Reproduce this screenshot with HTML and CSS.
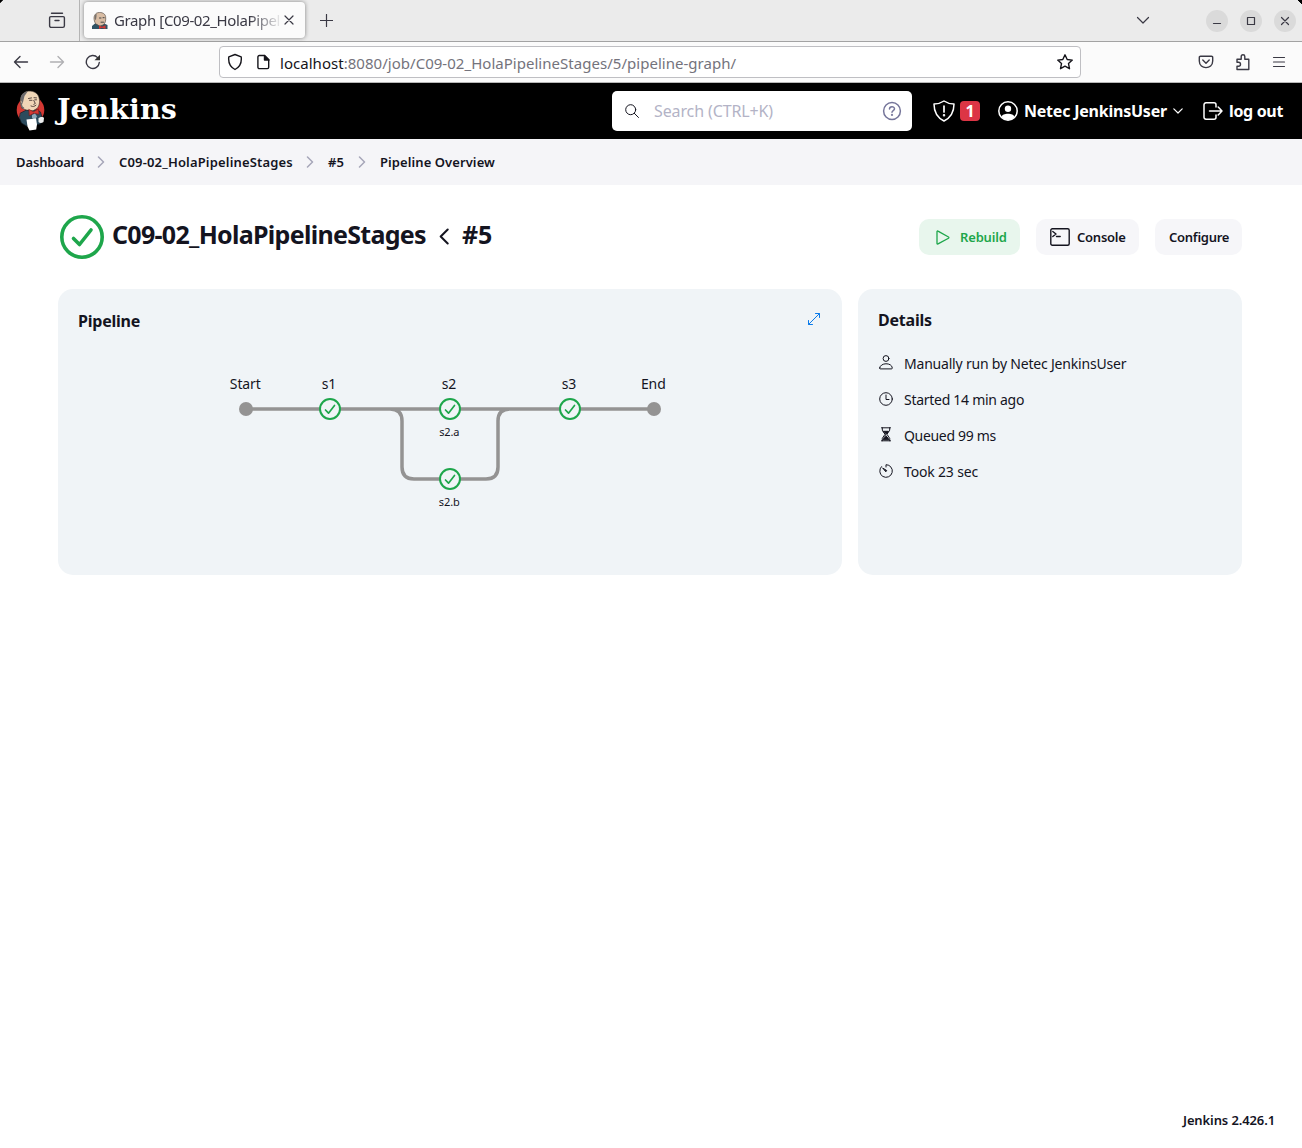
FILE: index.html
```
<!DOCTYPE html>
<html lang="en">
<head>
<meta charset="utf-8">
<title>Graph [C09-02_HolaPipelineStages]</title>
<link rel="stylesheet" href="styles.css">
</head>
<body>
<svg class="defs" width="0" height="0">
  <symbol id="chev" viewBox="0 0 8 12"><path d="M1.5 1l5 5-5 5"/></symbol>
</svg>

<div class="tabbar">
  <div class="history"><svg width="18" height="18" viewBox="0 0 18 18" class="ico"><path d="M3.500 2.200h11M2.800 5.600h12.400a1.200 1.200 0 0 1 1.200 1.200v8a1.600 1.600 0 0 1-1.600 1.600H3.200a1.600 1.600 0 0 1-1.600-1.600v-8a1.200 1.200 0 0 1 1.200-1.200zM7 9.500h4"/></svg></div>
  <div class="tab">
    <svg class="favicon" width="16" height="17" viewBox="0 0 16 17">
      <path d="M0 17v-3l3-2.500h9l3.500 1.500v4z" fill="#2f5264"/>
      <path d="M3.500 11.500C1.500 8 1.200 3.500 4.500 1.200 8-.5 13 .8 13.600 4.500c.5 3.500-.1 7-2.600 8.500L8 14z" fill="#d9bda4" stroke="#5b5149" stroke-width=".7"/>
      <path d="M3.700 8.500C2 6 2.200 3 4.500 1.500c.3 2-.2 4.500-.8 7z" fill="#77716c"/>
      <path d="M7.500 6h1.500M11 5.700h1.200M9 10.200h2.500" stroke="#444" stroke-width="1"/>
      <path d="M7 13.500l3 1.200 3.500-1.500v3.800l-3.500-1.200-3 1.200z" fill="#d33833"/>
    </svg>
    <span class="tab-title">Graph [C09-02_HolaPipel</span>
    <svg width="10" height="10" viewBox="0 0 10 10" class="ico thin close"><path d="M1 1l8 8M9 1L1 9"/></svg>
  </div>
  <svg width="13" height="13" viewBox="0 0 13 13" class="ico thin plus"><path d="M6.500 .5v12M.5 6.500h12"/></svg>
  <div class="window-controls">
    <svg width="14" height="9" viewBox="0 0 14 9" class="ico thin tabs-menu"><path d="M1.500 1.500L7 7l5.500-5.500"/></svg>
    <span class="wbtn"><svg width="10" height="10" viewBox="0 0 10 10" class="ico thin"><path d="M1.500 7.500h7"/></svg></span>
    <span class="wbtn"><svg width="10" height="10" viewBox="0 0 10 10" class="ico thin"><path d="M1.500 1.500h7v7h-7z"/></svg></span>
    <span class="wbtn"><svg width="10" height="10" viewBox="0 0 10 10" class="ico thin"><path d="M1.500 1.500l7 7M8.500 1.500l-7 7"/></svg></span>
  </div>
</div>

<div class="toolbar">
  <svg width="16" height="14" viewBox="0 0 16 14" class="ico"><path d="M14.500 7H1.500M7 1.500L1.500 7 7 12.500"/></svg>
  <svg width="16" height="14" viewBox="0 0 16 14" class="ico faded"><path d="M1.500 7h13M9 1.500L14.500 7 9 12.500"/></svg>
  <svg width="16" height="16" viewBox="0 0 16 16" class="ico reload"><path d="M14.300 8.500A6.500 6.500 0 1 1 12.600 3.600L14 5"/><path d="M15 .8v5.500H9.500z" fill="#333" stroke="none"/></svg>
  <div class="urlbar">
    <svg width="16" height="18" viewBox="0 0 16 18" class="ico dark"><path d="M8 1.500l6.200 2.300c.6 5-1 10-6.200 12.700C2.800 13.800 1.200 8.800 1.800 3.800z"/></svg>
    <svg width="13" height="16" viewBox="0 0 13 16" class="ico dark page"><path d="M2.300 1.500h5.200l4.200 4.200v7.500a1.400 1.400 0 0 1-1.400 1.400h-8A1.400 1.400 0 0 1 .9 13.200V2.900a1.400 1.400 0 0 1 1.400-1.400z"/><path d="M7.500 1.500V6h4.500z" fill="#15141a"/></svg>
    <span class="url"><b>localhost</b>:8080/job/C09-02_HolaPipelineStages/5/pipeline-graph/</span>
    <svg width="18" height="18" viewBox="0 0 18 18" class="ico dark star"><path d="M9 1.800l2.200 4.700 5.100.6-3.800 3.500 1 5.100L9 13.200l-4.500 2.500 1-5.100L1.700 7.100l5.100-.6z"/></svg>
  </div>
  <div class="tools">
    <svg width="16" height="16" viewBox="0 0 16 16" class="ico"><path d="M2.500 2.200h11a1.200 1.200 0 0 1 1.200 1.200V7c0 8.800-13.400 8.800-13.400 0V3.400a1.200 1.200 0 0 1 1.200-1.200zM4.800 6l3.200 3.200L11.200 6"/></svg>
    <svg width="16" height="18" viewBox="0 0 16 18" class="ico"><path d="M2 9.200V6.200h4.200V3.500a1.800 1.800 0 0 1 3.600 0v2.700h4v10.300H2v-3.300h1.500a2 2 0 0 0 0-4z"/></svg>
    <svg width="14" height="12" viewBox="0 0 14 12" class="ico thin"><path d="M1.500 1.500h11M1.500 6h11M1.500 10.500h11"/></svg>
  </div>
</div>

<header class="header">
  <svg class="butler" width="32" height="42" viewBox="0 0 32 42">
    <circle cx="15.500" cy="20" r="13.800" fill="#d33833"/>
    <path d="M5.500 23l6-3h11l3 2 2 7-2 5-14 2-5-3-2-5z" fill="#2c4b5d" stroke="#12202a" stroke-width=".7"/>
    <path d="M7 18C4 12.500 5 5 9.500 2.500 14-.3 21 1 23.500 6c1.800 4.500 1.200 9.500-1.500 12.500l-4 2.300c-4 0-9-1-11-2.800z" fill="#f0d6b7" stroke="#332b28" stroke-width=".6"/>
    <path d="M7.800 13C4.500 10.500 5 4.500 9.500 2.500c1-.6 2.200-.9 3.200-1L9.500 6z" fill="#6d6b6d"/>
    <path d="M7 13c-1.200.5-.6 4 1.500 5" fill="none" stroke="#6d6b6d" stroke-width="1.400"/>
    <path d="M13.500 8.500l3-.6M19 7.700l2.500.2M14.500 10.300h2.500M19.800 9.800h1.700M18.800 10.500l1.500 3-1.500.8M16 16c2 1 3.500.5 5-.8" fill="none" stroke="#4a3a35" stroke-width=".9"/>
    <path d="M14 19.500l4.500 2.300 5-3 .5 5.500-5-1-4.500 2.200z" fill="#d33833" stroke="#7b1a1a" stroke-width=".6"/>
    <path d="M17 25l3-1.500 2 3-2 3.500-3-2z" fill="#8fa9ba"/>
    <path d="M23.500 28.500c1-2 5-2 5.500-.5l-.5 4c-2 1.500-4 1-5 0z" fill="#eee"/>
    <path d="M11.500 29.500l9.500-1 1 6-.8 5-6.700 1-2-4z" fill="#fff"/>
  </svg>
  <span class="wordmark">Jenkins</span>
  <div class="search">
    <svg width="14" height="14" viewBox="0 0 14 14" class="ico hair"><circle cx="5.700" cy="5.700" r="5"/><path d="M9.300 9.300L13.500 13.500"/></svg>
    <span class="placeholder">Search (CTRL+K)</span>
    <svg width="20" height="20" viewBox="0 0 20 20" class="help"><circle cx="10" cy="10" r="8.400"/><path d="M7.500 8.100c0-3.200 5-3 5-.3 0 1.700-2.500 1.800-2.500 3.500"/><circle cx="10" cy="13.900" r=".4"/></svg>
  </div>
  <svg width="22" height="22" viewBox="0 0 22 22" class="white warn"><path d="M11 1c3 2 6 3 10 3 0 9-4 14-10 17C5 18 1 13 1 4c4 0 7-1 10-3z"/><path d="M11 6v6" stroke-width="1.700"/><circle cx="11" cy="15.300" r=".5"/></svg>
  <span class="count">1</span>
  <svg width="20" height="20" viewBox="0 0 20 20" class="white person"><circle cx="10" cy="10" r="9.200"/><circle cx="10" cy="7.700" r="3.200" fill="#fff" stroke="none"/><path d="M3.600 16c.4-4.200 12.400-4.200 12.800 0-3 4-9.800 4-12.800 0z" fill="#fff" stroke="none"/></svg>
  <span class="user">Netec JenkinsUser</span>
  <svg width="10" height="6" viewBox="0 0 10 6" class="white caret"><path d="M.8 .8L5 5 9.200 .8"/></svg>
  <svg width="20" height="18" viewBox="0 0 20 18" class="white exit"><path d="M13 5V2.800A2 2 0 0 0 11 .8H3a2 2 0 0 0-2 2v12.400a2 2 0 0 0 2 2h8a2 2 0 0 0 2-2V13M6.500 9H19M15.200 5L19 9l-3.800 4"/></svg>
  <span class="logout">log out</span>
</header>

<nav class="crumbs">
  <span class="c1">Dashboard</span><svg width="8" height="12"><use href="#chev"/></svg>
  <span class="c2">C09-02_HolaPipelineStages</span><svg width="8" height="12"><use href="#chev"/></svg>
  <span class="c3">#5</span><svg width="8" height="12"><use href="#chev"/></svg>
  <span class="c4">Pipeline Overview</span>
</nav>

<main class="main">
  <div class="title-row">
    <svg class="status" width="44" height="44" viewBox="0 0 44 44"><circle cx="22" cy="22" r="20.200"/><path d="M13.500 23.500l6 6L31 15"/></svg>
    <h1><span>C09-02_HolaPipelineStages</span><svg width="10" height="17" viewBox="0 0 10 17"><path d="M8.700 1.500l-7 7 7 7"/></svg><span class="num">#5</span></h1>
    <div class="actions">
      <span class="btn rebuild"><svg width="14" height="15" viewBox="0 0 14 15"><path d="M1 1.600v11.800c0 .6.500.8 1 .5l10.500-5.700c.5-.3.500-.9 0-1.200L2 1.100c-.5-.3-1-.1-1 .5z"/></svg><span>Rebuild</span></span>
      <span class="btn console"><svg width="20" height="18" viewBox="0 0 20 18"><rect x=".8" y=".8" width="18.400" height="16.400" rx="1.500"/><path d="M2.800 3.500l3.200 2.500-3.200 2.500M6.500 8.500h3.700"/></svg><span>Console</span></span>
      <span class="btn configure"><span>Configure</span></span>
    </div>
  </div>
  <div class="cards">
    <section class="card">
      <div class="card-head"><h2 class="pipe">Pipeline</h2>
        <svg width="14" height="14" viewBox="0 0 14 14" class="expand"><path d="M1.500 12.500l11-11M8.500 1.500h4v4M1.500 8.500v4h4"/></svg>
      </div>
      <svg class="graph" width="480" height="160" viewBox="210 360 480 160">
        <g class="edges"><path d="M246 409H654M340 409h50q12 0 12 12v46q0 12 12 12h72q12 0 12-12v-46q0-12 12-12h50"/></g>
        <circle cx="246" cy="409" r="7" fill="#949393"/><circle cx="654" cy="409" r="7" fill="#949393"/>
        <g class="nodes">
          <g transform="translate(330 409)"><circle r="10"/><path d="M-4.500 1l3 3.200L4.500-3.500"/></g>
          <g transform="translate(450 409)"><circle r="10"/><path d="M-4.500 1l3 3.200L4.500-3.500"/></g>
          <g transform="translate(570 409)"><circle r="10"/><path d="M-4.500 1l3 3.200L4.500-3.500"/></g>
          <g transform="translate(450 479)"><circle r="10"/><path d="M-4.500 1l3 3.200L4.500-3.500"/></g>
        </g>
        <g class="labels"><text x="245.300" y="389">Start</text><text x="329" y="389">s1</text><text x="449" y="389">s2</text><text x="569" y="389">s3</text><text x="653.300" y="389">End</text></g>
        <g class="labels small"><text x="449.300" y="436">s2.a</text><text x="449.300" y="506">s2.b</text></g>
      </svg>
    </section>
    <section class="card details">
      <h2>Details</h2>
      <ul>
        <li><svg width="14" height="15" viewBox="0 0 14 15"><circle cx="7" cy="3.500" r="2.900"/><path d="M.7 13c.3-5.700 12.300-5.700 12.600 0 0 .6-.3.900-.9.900H1.600c-.6 0-.9-.3-.9-.9z"/></svg><span class="d1">Manually run by Netec JenkinsUser</span></li>
        <li><svg width="14" height="14" viewBox="0 0 14 14"><circle cx="7" cy="7" r="6.300"/><path d="M7 3v4.500h3"/></svg><span class="d2">Started 14 min ago</span></li>
        <li><svg width="14" height="15" viewBox="0 0 14 15"><path d="M2.500 .8h9M2.500 13.800h9M3.300 .8v2.400L6 7.300 3.300 11.400v2.400M10.700 .8v2.400L8 7.300l2.700 4.100v2.400"/><path d="M4.500 4.300h5L7 7.300zM7 8.800l2.500 3v1h-5v-1z" fill="#14141f"/></svg><span class="d3">Queued 99 ms</span></li>
        <li><svg width="14" height="14" viewBox="0 0 14 14"><path d="M7 3V.7A6.300 6.300 0 1 1 2.500 2.600"/><path d="M4 4.200l3.700 2.300-.7 1z" fill="#14141f"/></svg><span class="d4">Took 23 sec</span></li>
      </ul>
    </section>
  </div>
</main>
<footer class="footer">Jenkins 2.426.1</footer>
</body>
</html>
```
FILE: styles.css
```
* { box-sizing: border-box; }
body {
  margin: 0;
  height: 1148px;
  display: flex;
  flex-direction: column;
  overflow: hidden;
  background: #fff;
  color: #14141f;
  font-family: "Noto Sans", "Liberation Sans", sans-serif;
}
svg { display: block; flex: none; fill: none; stroke-linecap: round; stroke-linejoin: round; }
.defs { position: absolute; }
span { white-space: nowrap; }
.ico { stroke: #3a3944; stroke-width: 1.4; }
.ico.thin { stroke-width: 1.2; }
.ico.dark { stroke: #15141a; }
.ico.faded { stroke: #b0b0b3; }
.ico.hair { stroke: #14141f; stroke-width: 1; }

/* browser chrome */
.tabbar {
  flex: none;
  height: 42px;
  display: flex;
  align-items: center;
  background: linear-gradient(135deg, #000 2px, transparent 2.5px) left top / 5px 5px no-repeat,
    linear-gradient(225deg, #000 3px, transparent 3.5px) right top / 5px 5px no-repeat, #ebebeb;
  border-bottom: 1px solid #a3a3a3;
}
.history { width: 80px; height: 41px; border-right: 1px solid #b5b5b5; padding: 11px 0 0 48px; }
.tab {
  width: 221px;
  height: 36px;
  margin: -1px 0 0 4px;
  padding: 0 11px 0 8px;
  display: flex;
  align-items: center;
  background: #fbfbfb;
  border-radius: 4px;
  box-shadow: 0 0 4px rgba(0, 0, 0, .45);
}
.tab-title {
  width: 170px;
  margin-left: 6px;
  font-size: 15px;
  letter-spacing: -.38px;
  color: #3a3944;
  -webkit-mask-image: linear-gradient(90deg, #000 135px, transparent 169px);
  mask-image: linear-gradient(90deg, #000 135px, transparent 169px);
}
.plus { margin-left: 15px; }
.window-controls { margin-left: auto; display: flex; align-items: center; gap: 12px; padding-right: 6px; }
.tabs-menu { margin-right: 44px; }
.wbtn { width: 22px; height: 22px; border-radius: 50%; background: #dadada; display: grid; place-items: center; }
.toolbar {
  flex: none;
  height: 41px;
  display: flex;
  align-items: center;
  gap: 20px;
  padding: 0 16px 0 13px;
  background: #fbfbfb;
  border-bottom: 1px solid #b8b8b8;
}
.urlbar {
  width: 862px;
  height: 32px;
  margin-left: 98px;
  padding: 0 6px 0 7px;
  display: flex;
  align-items: center;
  background: #fff;
  border: 1px solid #bfbfc3;
  border-radius: 4px;
}
.page { margin-left: 14px; }
.url { margin: 1px 0 0 10px; font-size: 15px; letter-spacing: .03px; color: #74737c; }
.url b { font-weight: 400; color: #15141a; }
.star { margin-left: auto; }
.tools { margin-left: auto; display: flex; align-items: center; gap: 21px; }

/* Jenkins header */
.header { flex: none; height: 56px; display: flex; align-items: center; background: #000; color: #fff; padding-left: 15px; font-size: 16px; font-weight: 700; }
.wordmark { width: 120px; margin: -4px 1px 0 10px; font-family: "DejaVu Serif", serif; font-size: 28.5px; }
.search {
  width: 300px;
  height: 40px;
  margin-left: 434px;
  padding: 0 10px 0 13px;
  display: flex;
  align-items: center;
  background: #fff;
  border-radius: 5px;
}
.placeholder { margin-left: 15px; font-weight: 400; letter-spacing: -.12px; color: #b3b3c6; }
.help { margin-left: auto; stroke: #75759a; stroke-width: 1.5; }
.white { stroke: #fff; stroke-width: 1.5; }
.warn { margin-left: 21px; }
.count { width: 20px; height: 20px; margin-left: 5px; border-radius: 4px; background: #dc3545; text-align: center; line-height: 20px; }
.person { margin-left: 18px; }
.user { width: 143px; margin-left: 6px; letter-spacing: -.22px; }
.caret { margin-left: 6px; stroke-width: 1.2; }
.exit { margin-left: 20px; }
.logout { margin-left: 6px; letter-spacing: -.34px; }

.crumbs {
  flex: none;
  height: 46px;
  display: flex;
  align-items: center;
  padding-left: 16px;
  background: #f5f5f8;
  font-size: 13px;
  font-weight: 600;
}
.crumbs svg { stroke: #a6a6b8; stroke-width: 1.5; margin: 0 14px 0 13px; }
.c1 { width: 68px; letter-spacing: -.12px; }
.c2 { width: 174px; letter-spacing: .17px; }
.c3 { width: 17px; }
.c4 { letter-spacing: .08px; }
.crumbs .c1, .crumbs .c2, .crumbs .c3, .crumbs .c4 { margin-top: -1px; }

/* run overview */
.main { flex: 1; padding: 30px 60px 0 58px; }
.title-row { display: flex; align-items: center; height: 44px; padding-left: 2px; }
.status { stroke: #1ea64b; stroke-width: 3.6; }
h1 { display: flex; align-items: center; margin: -7px 0 0 8px; font-size: 25px; font-weight: 700; letter-spacing: -.7px; }
h1 span:first-child { width: 315px; }
h1 svg { stroke: #14141f; stroke-width: 2; margin: 6px 13px 0 12px; }
.num { letter-spacing: -.2px; }
.actions { margin-left: auto; display: flex; gap: 16px; font-size: 13px; font-weight: 600; }
.btn { height: 36px; display: flex; align-items: center; border-radius: 10px; background: #f6f6f9; }
.rebuild { width: 101px; padding-left: 17px; gap: 10px; background: #e8f6ed; color: #1ea64b; letter-spacing: -.16px; }
.rebuild svg { stroke: #1ea64b; stroke-width: 1.3; }
.console { width: 103px; padding-left: 14px; gap: 7px; letter-spacing: -.24px; }
.console svg { stroke: #14141f; stroke-width: 1.4; }
.configure { width: 87px; padding-left: 14px; letter-spacing: -.26px; }
.cards { display: flex; gap: 16px; margin-top: 30px; }
.card { width: 784px; height: 286px; padding: 20px; border-radius: 15px; background: #f0f4f7; }
.card-head { display: flex; justify-content: space-between; align-items: flex-start; height: 51px; }
h2 { margin: 0; font-size: 16px; line-height: 22px; font-weight: 700; letter-spacing: -.22px; }
.pipe { margin-top: 1px; }
.expand { margin: 3px 1px 0; stroke: #0b7bea; stroke-width: 1; }
.graph { margin-left: 132px; }
.edges { stroke: #949393; stroke-width: 3.5; stroke-linecap: butt; }
.nodes { stroke: #1ea64b; stroke-width: 1.7; }
.nodes circle { fill: #f0f4f7; stroke-width: 2; }
.labels { fill: #14141f; font-size: 14px; letter-spacing: -.1px; text-anchor: middle; }
.labels.small { font-size: 11px; }
.details { width: 384px; }
ul { list-style: none; margin: 21px 0 0; padding: 0; }
li { display: flex; align-items: center; gap: 11px; height: 22px; margin-bottom: 14px; padding-left: 1px; font-size: 14px; }
li svg { stroke: #14141f; stroke-width: 1; margin-top: -1px; }
.d1 { letter-spacing: -.2px; }
.d2 { letter-spacing: -.28px; }
.d3 { letter-spacing: -.33px; }
.d4 { letter-spacing: -.17px; }
.footer { flex: none; padding: 0 27px 18px 0; text-align: right; font-size: 13px; line-height: 19px; font-weight: 600; letter-spacing: -.11px; }
```
